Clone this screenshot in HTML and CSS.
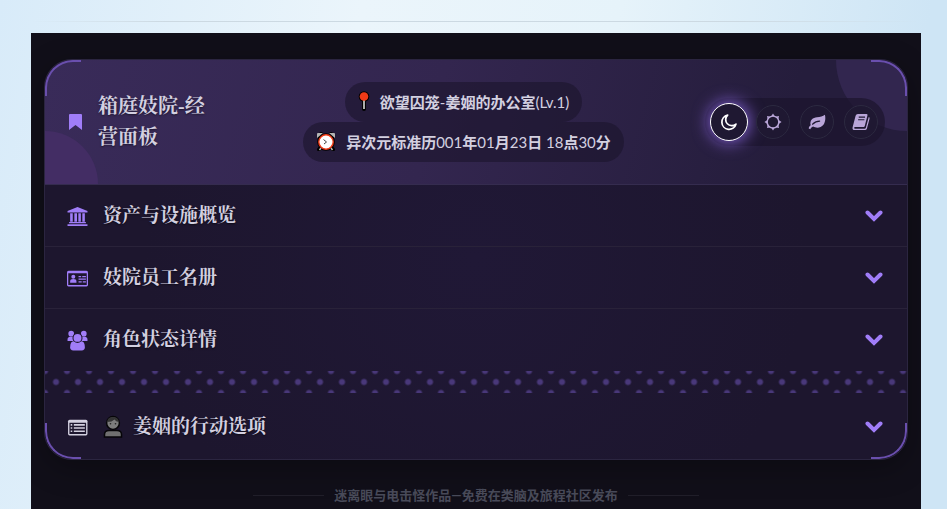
FILE: index.html
```html
<!DOCTYPE html>
<html lang="zh-CN">

<head>
    <meta charset="UTF-8">
    <meta name="viewport" content="width=device-width, initial-scale=1.0">
    <title>箱庭妓院-经营面板</title>
    <link rel="stylesheet" href="styles.css">
</head>

<body>
    <hr class="top_line">
    <div class="panel">
        <main class="card">
            <header class="header">
                <div class="title_box">
                    <svg class="title_icon" viewBox="0 0 14 16"><path d="M1.5 0h11A1 1 0 0 1 13.500 1v15L7 11 .5 16V1a1 1 0 0 1 1-1z" fill="#a07df8"/></svg>
                    <h1 class="title">箱庭妓院-经营面板</h1>
                </div>
                <div class="info">
                    <div class="pill">
                        <svg class="emoji pin" viewBox="4 0 12 20">
                            <path d="M10 8v10" stroke="#000" stroke-width="4" stroke-linecap="round"/>
                            <circle cx="10" cy="5.500" r="5.300" fill="#000"/>
                            <path d="M10 8v10" stroke="#d8d8d8" stroke-width="1.600"/>
                            <circle cx="10" cy="5.500" r="4.300" fill="#f03a17"/>
                        </svg>
                        <span>欲望囚笼<i>-</i>姜姻的办公室<i>(Lv.1)</i></span>
                    </div>
                    <div class="pill">
                        <svg class="emoji" viewBox="0 0 20 20">
                            <path d="M5 16l-2 2.500M15 16l2 2.500M3 5l2-2M17 5l-2-2" stroke="#000" stroke-width="4" stroke-linecap="round"/>
                            <circle cx="10" cy="11" r="8.800" fill="#000"/>
                            <path d="M1 7V3q0-1 1-1h5zM19 7V3q0-1-1-1h-5z" fill="#b5b5b5"/>
                            <path d="M5 17l-1.500 2M15 17l1.500 2" stroke="#bbb" stroke-width="1.400"/>
                            <circle cx="10" cy="11" r="7.200" fill="#fff" stroke="#f03a17" stroke-width="1.400"/>
                            <path d="M7.500 8.500l3 2.500L8 13" fill="none" stroke="#444" stroke-width="1"/>
                        </svg>
                        <span>异次元标准历<i>001</i>年<i>01</i>月<i>23</i>日<i> 18</i>点<i>30</i>分</span>
                    </div>
                </div>
                <nav class="themes">
                    <button class="theme active" aria-label="夜间">
                        <svg viewBox="0 0 20 20"><path d="M8.500 2.300A8 8 0 1 0 17.800 12.300 6.600 6.600 0 0 1 8.500 2.300z" fill="none" stroke="#fff" stroke-width="1.900" stroke-linejoin="round"/></svg>
                    </button>
                    <button class="theme" aria-label="日间">
                        <svg viewBox="0 0 20 20">
                            <path d="M10 .5l2.400 3.700h-4.800zM10 19.500l2.400-3.700h-4.800zM.5 10l3.700-2.400v4.800zM19.500 10l-3.700-2.400v4.800zM3.300 3.300l4.300.9-3.400 3.400zM16.700 3.300l-.9 4.300-3.400-3.400zM3.300 16.700l.9-4.300 3.400 3.400zM16.700 16.700l-4.300-.9 3.400-3.400z" fill="#b9a5d8"/>
                            <circle cx="10" cy="10" r="6.500" fill="#1f1832" stroke="#b9a5d8" stroke-width="1.600"/>
                        </svg>
                    </button>
                    <button class="theme" aria-label="自然">
                        <svg viewBox="0 0 20 20">
                            <path d="M18.800 2C20 7 19 13.500 14 15.500c-3 1.400-6 .8-8.300-.5C4 15.500 3 17 2.500 18L.8 17.200C1 15.500 2 14.500 3 13.700 1.500 8 5.500 5 10 4.700c3.500-.2 6.500-.7 8.800-2.700z" fill="#b9a5d8"/>
                            <path d="M5 12.500C7.500 10 10 9 13 9" fill="none" stroke="#1f1832" stroke-width="1.200" stroke-linecap="round"/>
                        </svg>
                    </button>
                    <button class="theme" aria-label="书卷">
                        <svg viewBox="0 0 20 20">
                            <path d="M6.500 1h9.500q1.500 0 1.200 1.500l-3 12q-.3 1-1.400 1H3.500q-1 0-1.200 1 0 1 1.200 1h10.500q1 0 1.400-1.200L18.600 4.500q1.200.3.900 1.800l-3 11.200q-.5 1.500-2 1.500H3Q.2 19 .6 16L4 3q.5-2 2.500-2z" fill="#b9a5d8"/>
                            <path d="M7.500 4.500h7M6.800 7.500h7" stroke="#1f1832" stroke-width="1.300"/>
                        </svg>
                    </button>
                </nav>
            </header>

            <button class="row">
                <svg class="row_icon" viewBox="0 0 20 20">
                    <path fill="#a07df8" d="M10 1l9.500 3.800v1.500H.5V4.800zM3 7h2.500v8H3zM7 7h2.500v8H7zM10.800 7h2.400v8h-2.400zM14.600 7h2.400v8h-2.400zM2 15.300h16v1.200H2zM.5 17.300h19v1.700H.5z"/>
                </svg>
                <span class="row_text">资产与设施概览</span>
                <svg class="chevron" viewBox="0 0 18 12"><path d="M2.500 2.500L9 9l6.500-6.500"/></svg>
            </button>
            <button class="row">
                <svg class="row_icon" viewBox="0 0 20 20">
                    <rect x="0" y="2.500" width="20" height="15" rx="1.500" fill="#a07df8"/>
                    <path d="M1.200 5h17.600v11.300H1.200z" fill="#1e172f"/>
                    <circle cx="6" cy="8.300" r="1.900" fill="#a07df8"/>
                    <path d="M3 14v-1.500q0-2 3-2t3 2V14zM11 7.500h2.500v1.200H11zM14.500 7.500H18v1.200h-3.500zM11 10h7v1.200h-7zM11 12.500h3v1.200h-3zM15 12.500h3v1.200h-3z" fill="#a07df8"/>
                </svg>
                <span class="row_text">妓院员工名册</span>
                <svg class="chevron" viewBox="0 0 18 12"><path d="M2.500 2.500L9 9l6.500-6.500"/></svg>
            </button>
            <button class="row">
                <svg class="row_icon" viewBox="0 0 20 20">
                    <g fill="#a07df8">
                        <circle cx="4" cy="3.500" r="2.700"/>
                        <circle cx="16" cy="3.500" r="2.700"/>
                        <path d="M.5 10.500V9q0-2.500 3-2.500h3v4zM19.500 10.500V9q0-2.500-3-2.500h-3v4z"/>
                        <path d="M3 16.500q0-6 4-6h6q4 0 4 6 0 3-3 3H6q-3 0-3-3z"/>
                        <circle cx="10" cy="7.500" r="4.300" stroke="#1e172f" stroke-width="1"/>
                    </g>
                </svg>
                <span class="row_text">角色状态详情</span>
                <svg class="chevron" viewBox="0 0 18 12"><path d="M2.500 2.500L9 9l6.500-6.500"/></svg>
            </button>
            <div class="dots"></div>
            <button class="row action">
                <svg class="row_icon" viewBox="0 0 20 20">
                    <rect x="1" y="2.500" width="18.500" height="15" rx="1.500" fill="#d3d0e0"/>
                    <path d="M2.300 5.500h15.900v10.700H2.300z" fill="#1e172f"/>
                    <path d="M3.500 7.500H5M6.500 7.500H17M3.500 10.500H5M6.500 10.500H17M3.500 13.500H5M6.500 13.500H17" stroke="#d3d0e0" stroke-width="1.500"/>
                </svg>
                <svg class="person" viewBox="0 0 20 24">
                    <path d="M1.500 22v-2.500Q1.500 15.500 6 15.500h8q4.500 0 4.500 4V22z" fill="#707070" stroke="#060508" stroke-width="1.500"/>
                    <circle cx="10" cy="8" r="6.400" fill="#7c7c7c" stroke="#060508" stroke-width="1.500"/>
                    <path d="M4.200 7Q4.500 2 10 2t5.800 5q-3-.5-4.300-2.500Q9 7 4.200 7z" fill="#333"/>
                    <circle cx="7.500" cy="8.800" r=".8" fill="#222"/>
                    <circle cx="12.500" cy="8.800" r=".8" fill="#222"/>
                </svg>
                <span class="row_text">姜姻的行动选项</span>
                <svg class="chevron" viewBox="0 0 18 12"><path d="M2.500 2.500L9 9l6.500-6.500"/></svg>
            </button>

            <span class="corner left_top"></span>
            <span class="corner right_top"></span>
            <span class="corner left_bottom"></span>
            <span class="corner right_bottom"></span>
        </main>
        <footer class="footer">迷离眼与电击怪作品—免费在类脑及旅程社区发布</footer>
    </div>
</body>

</html>
```

FILE: styles.css
```css
* {
    margin: 0;
    padding: 0;
    box-sizing: border-box;
}

body {
    min-height: 100vh;
    display: flex;
    flex-direction: column;
    padding: 21px 26px 0 31px;
    background: linear-gradient(100deg, #d8ebf9 0%, #ebf5fb 35%, #e6f3fa 60%, #cee5f5 90%);
    font-family: "Lato", "Noto Sans CJK SC", sans-serif;
}

button {
    border: none;
    background: none;
    color: inherit;
    font: inherit;
    cursor: pointer;
}

.top_line {
    height: 1px;
    border: none;
    background: linear-gradient(90deg, transparent, #ccd9e2 15%, #ccd9e2 80%, transparent);
}

.panel {
    flex: 1;
    margin-top: 11px;
    padding: 26px 13px 0;
    background: #110f19;
    overflow: hidden;
}

.card {
    position: relative;
    border: 1px solid #2b2540;
    border-radius: 28px;
    overflow: hidden;
    background: radial-gradient(circle at center, #201836, #1d162e 70%);
    box-shadow: 0 8px 30px rgba(0, 0, 0, 0.3);
    color: #d3d0e0;
}

.header {
    position: relative;
    display: flex;
    justify-content: space-between;
    align-items: center;
    padding: 22px 22px 22px 23px;
    border-bottom: 1px solid #352c4f;
    overflow: hidden;
    background: linear-gradient(105deg, #392b59 0%, #33264f 45%, #251d3c 85%);
}

.header::before,
.header::after {
    content: "";
    position: absolute;
    border-radius: 50%;
}

.header::before {
    width: 106px;
    height: 106px;
    left: -53px;
    bottom: -53px;
    background: #432d64;
}

.header::after {
    width: 142px;
    height: 142px;
    right: -71px;
    top: -71px;
    background: #32264f;
}

.title_box,
.info,
.themes {
    position: relative;
    z-index: 1;
}

.title_box {
    display: flex;
    align-items: center;
    gap: 15px;
}

.title_icon {
    width: 15px;
    height: 16px;
}

.title {
    width: 124px;
    font-family: "Liberation Serif", "Noto Serif CJK SC", "Noto Sans CJK SC", serif;
    font-size: 20px;
    line-height: 31px;
    text-shadow: 0 1px 2px rgba(0, 0, 0, 0.5);
}

.info {
    display: flex;
    flex-direction: column;
    align-items: center;
}

.pill {
    display: flex;
    align-items: center;
    gap: 10px;
    height: 40px;
    padding: 0 13px 2px;
    border-radius: 20px;
    background: rgba(27, 20, 44, 0.6);
    font-size: 15px;
    font-weight: bold;
}

.pill i {
    font-style: normal;
    font-weight: normal;
    white-space: pre;
}

.emoji {
    width: 20px;
    height: 20px;
}

.emoji.pin {
    width: 12px;
}

.themes {
    display: flex;
    align-items: center;
    gap: 10px;
    padding: 7px;
    border-radius: 24px;
    background: rgba(27, 20, 44, 0.7);
}

.theme {
    display: flex;
    align-items: center;
    justify-content: center;
    width: 34px;
    height: 34px;
    border: 1px solid #2c2940;
    border-radius: 50%;
    background: #1f1832;
}

.theme svg {
    width: 18px;
    height: 18px;
}

.theme.active {
    width: 38px;
    height: 38px;
    margin: -2px;
    border: 1px solid #fff;
    box-shadow: 0 0 16px 2px #7d5dcb;
}

.row {
    display: flex;
    align-items: center;
    gap: 15px;
    width: 100%;
    padding: 17px 24px 16px 22px;
    border-bottom: 1px solid #292239;
    text-align: left;
}

.row:nth-of-type(3) {
    border-color: transparent;
}

.row_icon {
    width: 21px;
    height: 21px;
}

.row_text {
    flex: 1;
    font-family: "Liberation Serif", "Noto Serif CJK SC", "Noto Sans CJK SC", serif;
    font-size: 19px;
    font-weight: bold;
    line-height: 28px;
    text-shadow: 0 1px 2px rgba(0, 0, 0, 0.6);
}

.chevron {
    width: 18px;
    height: 12px;
    fill: none;
    stroke: #a07df8;
    stroke-width: 4;
    stroke-linecap: round;
}

.dots {
    height: 22px;
    background-image: radial-gradient(circle at 11px 11px, #49387a 2px, transparent 4px),
        radial-gradient(circle at 0 0, #49387a 2px, transparent 4px),
        radial-gradient(circle at 22px 0, #49387a 2px, transparent 4px),
        radial-gradient(circle at 0 22px, #49387a 2px, transparent 4px),
        radial-gradient(circle at 22px 22px, #49387a 2px, transparent 4px);
    background-size: 22px 22px;
}

.row.action {
    padding-top: 20px;
    padding-bottom: 18px;
    border-bottom: none;
}

.person {
    width: 20px;
    height: 24px;
    margin-right: -5px;
}

.corner {
    position: absolute;
    width: 36px;
    height: 36px;
    border: 0 solid #6a4fae;
    pointer-events: none;
    z-index: 2;
}

.left_top {
    top: 0;
    left: 0;
    border-width: 2px 0 0 2px;
    border-top-left-radius: 28px;
}

.right_top {
    top: 0;
    right: 0;
    border-width: 2px 2px 0 0;
    border-top-right-radius: 28px;
}

.left_bottom {
    bottom: 0;
    left: 0;
    border-width: 0 0 2px 2px;
    border-bottom-left-radius: 28px;
}

.right_bottom {
    bottom: 0;
    right: 0;
    border-width: 0 2px 2px 0;
    border-bottom-right-radius: 28px;
}

.footer {
    display: flex;
    align-items: center;
    justify-content: center;
    gap: 10px;
    padding-top: 25px;
    color: #494b5a;
    font-size: 13px;
    font-weight: bold;
    line-height: 20px;
}

.footer::before,
.footer::after {
    content: "";
    width: 71px;
    height: 1px;
    background: #211f2a;
}
```
